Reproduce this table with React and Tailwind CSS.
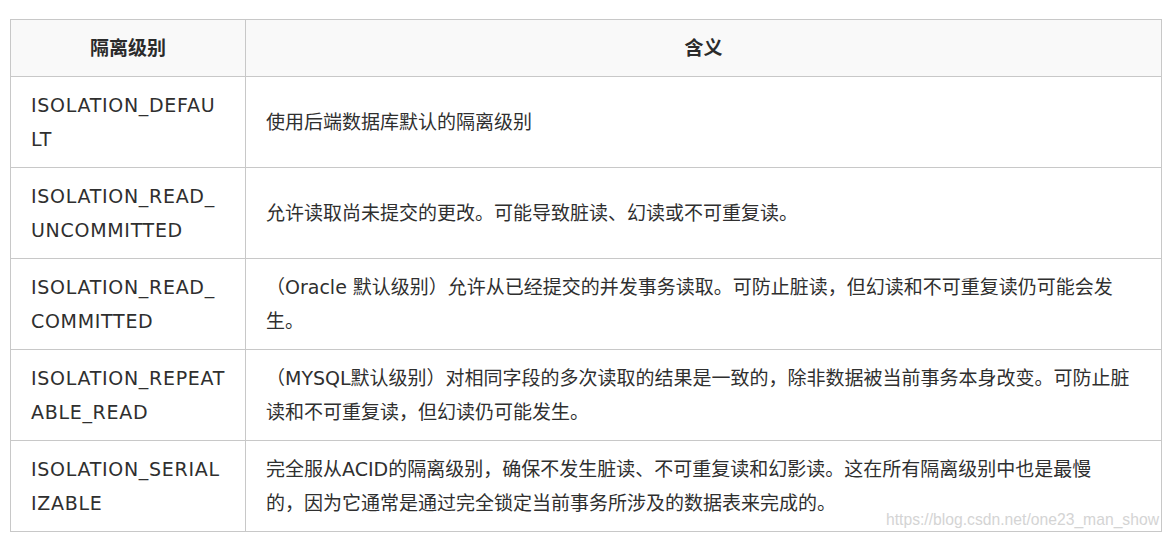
import React from 'react';

const rows = [
    {
        name: ['ISOLATION_DEFAU', 'LT'],
        desc: ['使用后端数据库默认的隔离级别'],
    },
    {
        name: ['ISOLATION_READ_', 'UNCOMMITTED'],
        desc: ['允许读取尚未提交的更改。可能导致脏读、幻读或不可重复读。'],
    },
    {
        name: ['ISOLATION_READ_', 'COMMITTED'],
        desc: ['（Oracle 默认级别）允许从已经提交的并发事务读取。可防止脏读，但幻读和不可重复读仍可能会发', '生。'],
    },
    {
        name: ['ISOLATION_REPEAT', 'ABLE_READ'],
        desc: ['（MYSQL默认级别）对相同字段的多次读取的结果是一致的，除非数据被当前事务本身改变。可防止脏', '读和不可重复读，但幻读仍可能发生。'],
    },
    {
        name: ['ISOLATION_SERIAL', 'IZABLE'],
        desc: ['完全服从ACID的隔离级别，确保不发生脏读、不可重复读和幻影读。这在所有隔离级别中也是最慢', '的，因为它通常是通过完全锁定当前事务所涉及的数据表来完成的。'],
    },
];

const Lines = ({ lines }) => (
    <>
        {lines.map((l, i) => (
            <div key={i} className="whitespace-nowrap">{l}</div>
        ))}
    </>
);

const App = () => {
    return (
        <div className="relative w-[1171px] h-[542px] bg-white pt-[19px] pl-[10px] font-['DejaVu_Sans','Noto_Sans_CJK_SC',sans-serif] text-[19px] leading-[34px] text-[#2f2f2f]">
            <table className="table-fixed border-collapse w-[1152px]">
                <colgroup>
                    <col className="w-[235px]" />
                    <col />
                </colgroup>
                <thead>
                    <tr className="bg-[#f9f9f9]">
                        <th className="border border-[#c8c8c8] h-[57px] px-5 text-center font-bold text-[#2b2b2b]">隔离级别</th>
                        <th className="border border-[#c8c8c8] h-[57px] px-5 text-center font-bold text-[#2b2b2b]">含义</th>
                    </tr>
                </thead>
                <tbody>
                    {rows.map((r) => (
                        <tr key={r.name.join('')}>
                            <td className="border border-[#c8c8c8] h-[91px] px-5 align-middle tracking-[0.7px]">
                                <Lines lines={r.name} />
                            </td>
                            <td className="border border-[#c8c8c8] h-[91px] px-5 align-middle">
                                <Lines lines={r.desc} />
                            </td>
                        </tr>
                    ))}
                </tbody>
            </table>
            <div className="absolute left-[886px] top-[510px] font-['Liberation_Sans',sans-serif] text-[15.7px] leading-[20px] text-[#d4d4d4]">
                https://blog.csdn.net/one23_man_show
            </div>
        </div>
    );
};

export default App;
